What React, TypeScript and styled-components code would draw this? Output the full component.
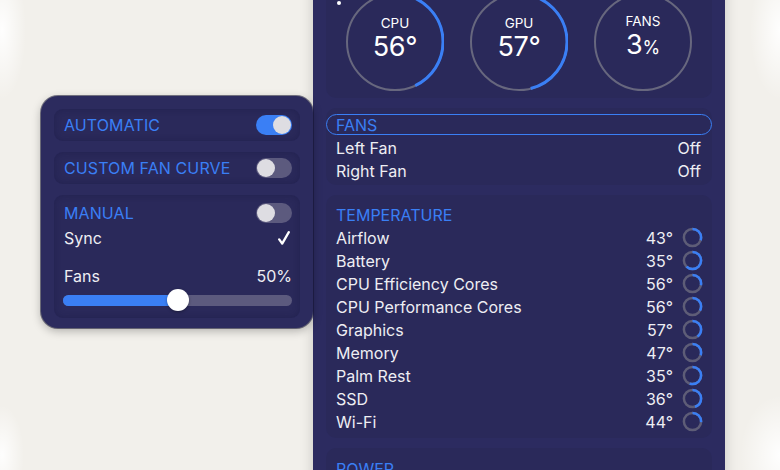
import React from 'react';
import styled, { createGlobalStyle } from 'styled-components';

const GlobalStyle = createGlobalStyle`
  html, body {
    margin: 0;
    padding: 0;
  }
  body {
    width: 780px;
    height: 470px;
    overflow: hidden;
    background: #f2f0eb;
    font-family: Inter, "Noto Sans", sans-serif;
    -webkit-font-smoothing: antialiased;
  }
`;

const BLUE = '#3a7ff5';
const TEXT = '#eeeef3';

const Stage = styled.div`
  width: 780px;
  height: 470px;
  box-sizing: border-box;
  overflow: hidden;
  display: flex;
  align-items: flex-start;
  padding-left: 41px;
  background:
    radial-gradient(ellipse 24px 70px at 2px 30px, rgba(255, 255, 255, 0.95), rgba(255, 255, 255, 0) 100%),
    radial-gradient(ellipse 22px 50px at 2px 455px, rgba(255, 255, 255, 0.9), rgba(255, 255, 255, 0) 100%),
    radial-gradient(ellipse 30px 70px at 780px 30px, rgba(255, 255, 255, 0.95), rgba(255, 255, 255, 0) 100%),
    radial-gradient(ellipse 40px 60px at 780px 455px, rgba(255, 255, 255, 0.95), rgba(255, 255, 255, 0) 100%),
    #f2f0eb;
`;

/* ---------- fan mode popover ---------- */

const Popover = styled.div`
  position: relative;
  z-index: 2;
  margin-top: 96px;
  width: 272px;
  height: 232px;
  flex-shrink: 0;
  box-sizing: border-box;
  padding: 13px 13px 10px;
  border-radius: 17px;
  background: #2c2b5e;
  box-shadow: 0 0 0 1px rgba(20, 20, 50, 0.55), 0 3px 10px rgba(0, 0, 0, 0.28);
  display: flex;
  flex-direction: column;
  gap: 11px;
`;

const OptionCard = styled.div<{ $tall?: boolean }>`
  box-sizing: border-box;
  flex-shrink: 0;
  height: ${(p) => (p.$tall ? '123px' : '32px')};
  padding: ${(p) => (p.$tall ? '8px 8px 0 10px' : '0 8px 0 10px')};
  border-radius: 9px;
  background: #2a295a;
  box-shadow: inset 0 0 6px rgba(20, 20, 60, 0.35);
  display: flex;
  flex-direction: column;
  justify-content: ${(p) => (p.$tall ? 'flex-start' : 'center')};
`;

const OptionRow = styled.div<{ $gap?: number }>`
  height: 20px;
  margin-top: ${(p) => p.$gap ?? 0}px;
  display: flex;
  align-items: center;
  justify-content: space-between;
`;

const OptionTitle = styled.span`
  color: ${BLUE};
  font-size: 16px;
  letter-spacing: 0.1px;
`;

const PlainLabel = styled.span`
  color: ${TEXT};
  font-size: 16px;
`;

const CheckIcon = styled.svg`
  margin-right: 2px;
  margin-top: -1px;
`;

const Check = () => (
  <CheckIcon width="12" height="14" viewBox="0 0 12 14">
    <path
      d="M1.2 8.4 L4.2 12.6 L10.8 1.2"
      fill="none"
      stroke="#ffffff"
      strokeWidth="2.3"
      strokeLinecap="round"
      strokeLinejoin="round"
    />
  </CheckIcon>
);

const ToggleTrack = styled.div<{ $on?: boolean }>`
  width: 36px;
  height: 20px;
  box-sizing: border-box;
  padding: 1px;
  border-radius: 10px;
  background: ${(p) => (p.$on ? BLUE : '#5c5a7e')};
  display: flex;
  justify-content: ${(p) => (p.$on ? 'flex-end' : 'flex-start')};
`;

const ToggleKnob = styled.div`
  width: 18px;
  height: 18px;
  border-radius: 50%;
  background: #dedde2;
`;

const Toggle = ({ on }: { on?: boolean }) => (
  <ToggleTrack $on={on}>
    <ToggleKnob />
  </ToggleTrack>
);

const SliderWrap = styled.div`
  position: relative;
  margin-top: 3px;
  margin-left: -1px;
  height: 22px;
  display: flex;
  align-items: center;
`;

const SliderTrack = styled.div`
  flex: 1;
  height: 11px;
  border-radius: 6px;
  background: #5c5a7e;
  overflow: hidden;
  display: flex;
`;

const SliderFill = styled.div`
  height: 100%;
  background: ${BLUE};
`;

const SliderThumb = styled.div`
  position: absolute;
  top: 0;
  width: 22px;
  height: 22px;
  margin-left: -11px;
  border-radius: 50%;
  background: #ffffff;
  box-shadow: 0 1px 3px rgba(0, 0, 0, 0.35);
`;

const Slider = ({ value }: { value: number }) => (
  <SliderWrap>
    <SliderTrack>
      <SliderFill style={{ width: `${value}%` }} />
    </SliderTrack>
    <SliderThumb style={{ left: `${value}%` }} />
  </SliderWrap>
);

/* ---------- sensor panel ---------- */

const Panel = styled.div`
  position: relative;
  z-index: 1;
  margin-top: -16px;
  width: 412px;
  height: 600px;
  flex-shrink: 0;
  box-sizing: border-box;
  padding: 0 13px;
  background: #2c2b60;
  box-shadow: 0 0 12px rgba(0, 0, 0, 0.18);
  display: flex;
  flex-direction: column;
  gap: 10px;
`;

const GaugeCard = styled.div`
  position: relative;
  height: 114px;
  flex-shrink: 0;
  box-sizing: border-box;
  padding-top: 9px;
  border-radius: 10px;
  background: #2a295a;
  display: flex;
  justify-content: center;
  gap: 26px;
`;

const Speck = styled.div`
  position: absolute;
  left: 11px;
  top: 17px;
  width: 4px;
  height: 4px;
  border-radius: 50%;
  background: #ffffff;
`;

const Gauge = styled.div`
  position: relative;
  width: 98px;
  height: 98px;
  box-sizing: border-box;
  padding-bottom: 7px;
  display: flex;
  flex-direction: column;
  align-items: center;
  justify-content: center;
  color: #ffffff;
`;

const GaugeRing = styled.svg`
  position: absolute;
  inset: 0;
`;

const GaugeLabel = styled.span`
  font-size: 13.5px;
  line-height: 14px;
`;

const GaugeValue = styled.span`
  margin-top: 2px;
  font-size: 27px;
  line-height: 30px;
  letter-spacing: -0.3px;
`;

const GaugeUnit = styled.span`
  font-size: 18px;
`;

const GaugeDial = ({
  label,
  value,
  unit,
  small,
  frac,
}: {
  label: string;
  value: number;
  unit: string;
  small?: boolean;
  frac: number;
}) => {
  const r = 48;
  const c = 2 * Math.PI * r;
  return (
    <Gauge>
      <GaugeRing width="98" height="98" viewBox="0 0 98 98">
        <circle cx="49" cy="49" r={r} fill="none" stroke="#67677e" strokeWidth="2" />
        <circle
          cx="49"
          cy="49"
          r={r}
          fill="none"
          stroke={BLUE}
          strokeWidth="3"
          strokeDasharray={`${c * frac} ${c}`}
          transform="rotate(-90 49 49)"
        />
      </GaugeRing>
      <GaugeLabel>{label}</GaugeLabel>
      <GaugeValue>
        {value}
        {small ? <GaugeUnit>{unit}</GaugeUnit> : unit}
      </GaugeValue>
    </Gauge>
  );
};

const Section = styled.div<{ $h: number; $top: number }>`
  height: ${(p) => p.$h}px;
  flex-shrink: 0;
  box-sizing: border-box;
  padding: ${(p) => p.$top}px 0 0;
  border-radius: 10px;
  background: #2a295a;
  display: flex;
  flex-direction: column;
`;

const SectionHeader = styled.div<{ $focused?: boolean }>`
  height: ${(p) => (p.$focused ? '21px' : '23px')};
  margin-bottom: ${(p) => (p.$focused ? '1px' : '0')};
  flex-shrink: 0;
  box-sizing: border-box;
  padding-left: ${(p) => (p.$focused ? '9px' : '10px')};
  border-radius: 11px;
  border: ${(p) => (p.$focused ? `1.5px solid ${BLUE}` : 'none')};
  color: ${BLUE};
  font-size: 16px;
  display: flex;
  align-items: center;
`;

const SensorRow = styled.div`
  height: 23px;
  flex-shrink: 0;
  padding: 0 9px 0 10px;
  display: flex;
  align-items: center;
  color: ${TEXT};
  font-size: 16px;
`;

const SensorName = styled.span`
  flex: 1;
`;

const SensorValue = styled.span<{ $pad?: number }>`
  margin-right: ${(p) => p.$pad ?? 0}px;
`;

const MiniRing = styled.svg`
  margin-left: 9px;
  flex-shrink: 0;
`;

const TempRing = ({ frac }: { frac: number }) => {
  const r = 8.6;
  const c = 2 * Math.PI * r;
  return (
    <MiniRing width="21" height="21" viewBox="0 0 21 21">
      <circle cx="10.5" cy="10.5" r={r} fill="none" stroke="#5e5d77" strokeWidth="2.5" />
      <circle
        cx="10.5"
        cy="10.5"
        r={r}
        fill="none"
        stroke={BLUE}
        strokeWidth="2.5"
        strokeDasharray={`${c * frac} ${c}`}
        transform="rotate(-90 10.5 10.5)"
      />
    </MiniRing>
  );
};

const temperatures = [
  { name: 'Airflow', value: 43, frac: 0.3 },
  { name: 'Battery', value: 35, frac: 0.62 },
  { name: 'CPU Efficiency Cores', value: 56, frac: 0.28 },
  { name: 'CPU Performance Cores', value: 56, frac: 0.33 },
  { name: 'Graphics', value: 57, frac: 0.4 },
  { name: 'Memory', value: 47, frac: 0.3 },
  { name: 'Palm Rest', value: 35, frac: 0.55 },
  { name: 'SSD', value: 36, frac: 0.45 },
  { name: 'Wi-Fi', value: 44, frac: 0.26 },
];

export default function App() {
  return (
    <>
      <GlobalStyle />
      <Stage>
        <Popover>
          <OptionCard>
            <OptionRow>
              <OptionTitle>AUTOMATIC</OptionTitle>
              <Toggle on />
            </OptionRow>
          </OptionCard>
          <OptionCard>
            <OptionRow>
              <OptionTitle>CUSTOM FAN CURVE</OptionTitle>
              <Toggle />
            </OptionRow>
          </OptionCard>
          <OptionCard $tall>
            <OptionRow>
              <OptionTitle>MANUAL</OptionTitle>
              <Toggle />
            </OptionRow>
            <OptionRow $gap={5}>
              <PlainLabel>Sync</PlainLabel>
              <Check />
            </OptionRow>
            <OptionRow $gap={18}>
              <PlainLabel>Fans</PlainLabel>
              <PlainLabel>50%</PlainLabel>
            </OptionRow>
            <Slider value={50} />
          </OptionCard>
        </Popover>

        <Panel>
          <GaugeCard>
            <Speck />
            <GaugeDial label="CPU" value={56} unit="°" frac={0.43} />
            <GaugeDial label="GPU" value={57} unit="°" frac={0.46} />
            <GaugeDial label="FANS" value={3} unit="%" small frac={0.0} />
          </GaugeCard>

          <Section $h={77} $top={6}>
            <SectionHeader $focused>FANS</SectionHeader>
            <SensorRow>
              <SensorName>Left Fan</SensorName>
              <SensorValue $pad={2}>Off</SensorValue>
            </SensorRow>
            <SensorRow>
              <SensorName>Right Fan</SensorName>
              <SensorValue $pad={2}>Off</SensorValue>
            </SensorRow>
          </Section>

          <Section $h={243} $top={8}>
            <SectionHeader>TEMPERATURE</SectionHeader>
            {temperatures.map((t) => (
              <SensorRow key={t.name}>
                <SensorName>{t.name}</SensorName>
                <SensorValue>{t.value}°</SensorValue>
                <TempRing frac={t.frac} />
              </SensorRow>
            ))}
          </Section>

          <Section $h={120} $top={9}>
            <SectionHeader>POWER</SectionHeader>
          </Section>
        </Panel>
      </Stage>
    </>
  );
}
